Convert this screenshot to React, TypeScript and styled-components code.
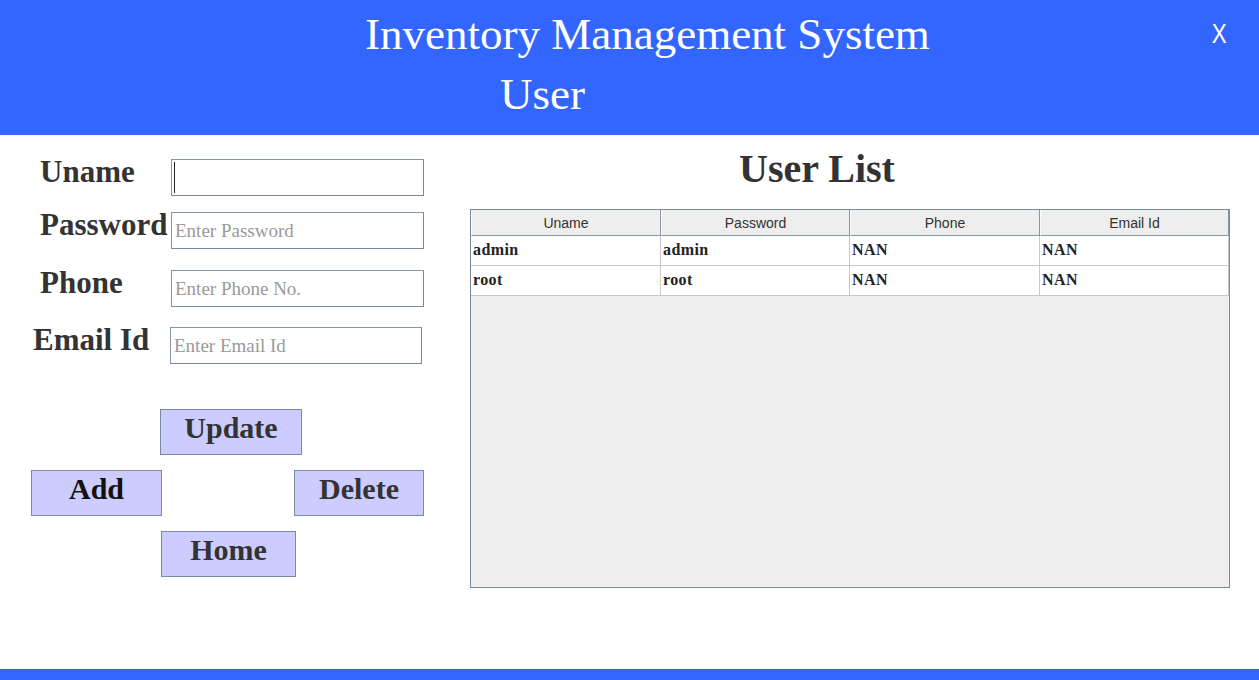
import { createGlobalStyle } from 'styled-components'
import styled from 'styled-components'

const GlobalStyle = createGlobalStyle`
  html, body {
    margin: 0;
    padding: 0;
    background: #ffffff;
  }
  body {
    font-family: 'Liberation Serif', 'Times New Roman', serif;
  }
`

const Page = styled.div`
  width: 1259px;
  height: 680px;
  display: flex;
  flex-direction: column;
  overflow: hidden;
`

const Header = styled.header`
  height: 135px;
  background: #3366ff;
  color: #ffffff;
  display: flex;
  justify-content: space-between;
  align-items: flex-start;
  flex-shrink: 0;
`

const TitleBlock = styled.div`
  display: flex;
  flex-direction: column;
  padding-top: 12px;
`

const AppTitle = styled.h1<{ $indent: number }>`
  margin: 0;
  padding-left: ${({ $indent }) => $indent}px;
  font-family: 'Liberation Serif', 'Times New Roman', serif;
  font-weight: normal;
  font-size: 45px;
  line-height: 44px;
  height: 60px;
  white-space: nowrap;
`

const CloseButton = styled.button`
  border: none;
  background: transparent;
  color: #ffffff;
  font-family: 'Liberation Sans', Arial, sans-serif;
  font-size: 28px;
  line-height: 28px;
  padding: 0;
  margin: 20px 30px 0 0;
  transform: scaleX(0.8);
  cursor: pointer;
`

const Main = styled.main`
  flex: 1;
  display: flex;
`

const LeftPanel = styled.section`
  width: 470px;
  padding-top: 24px;
  display: flex;
  flex-direction: column;
`

const FieldRow = styled.div<{ $gap: number; $labelLeft: number; $inputLeft: number }>`
  display: flex;
  align-items: flex-start;
  margin-top: ${({ $gap }) => $gap}px;
  padding-left: ${({ $labelLeft }) => $labelLeft}px;

  & > label {
    width: ${({ $inputLeft, $labelLeft }) => $inputLeft - $labelLeft}px;
  }
`

const Label = styled.label`
  margin-top: -2px;
  font-family: 'Liberation Serif', 'Times New Roman', serif;
  font-weight: bold;
  font-size: 31px;
  line-height: 30px;
  color: #333333;
  white-space: nowrap;
`

const InputBox = styled.div<{ $width: number }>`
  position: relative;
  width: ${({ $width }) => $width}px;
  height: 37px;
  box-sizing: border-box;
  border: 1px solid #7a8898;
  border-top-color: #8795a4;
  border-left-color: #8795a4;
  background: #ffffff;
`

const TextInput = styled.input`
  width: 100%;
  height: 100%;
  box-sizing: border-box;
  border: none;
  outline: none;
  padding: 0 0 0 3px;
  font-family: 'Liberation Serif', 'Times New Roman', serif;
  font-size: 19px;
  color: #333333;
  background: transparent;

  &::placeholder {
    color: #9a9a9a;
  }
`

const Caret = styled.span`
  position: absolute;
  left: 2px;
  top: 2px;
  bottom: 2px;
  width: 1px;
  background: #222222;
`

const ButtonArea = styled.div`
  margin-top: 45px;
  display: flex;
  flex-direction: column;
  gap: 15px;
`

const ButtonRow = styled.div<{ $left: number; $right?: number }>`
  display: flex;
  justify-content: space-between;
  padding-left: ${({ $left }) => $left}px;
  width: ${({ $right, $left }) => ($right ? $right - $left : 'auto')}px;
`

const ActionButton = styled.button<{ $width: number; $dark?: boolean }>`
  width: ${({ $width }) => $width}px;
  height: 46px;
  box-sizing: border-box;
  border: 1px solid #7a8aa2;
  background: #ccccff;
  display: flex;
  justify-content: center;
  align-items: flex-start;
  padding: 3px 0 0;
  font-family: 'Liberation Serif', 'Times New Roman', serif;
  font-weight: bold;
  font-size: 30px;
  line-height: 30px;
  color: ${({ $dark }) => ($dark ? '#111111' : '#333333')};
  cursor: pointer;
`

const RightPanel = styled.section`
  width: 760px;
  display: flex;
  flex-direction: column;
`

const ListTitle = styled.h2`
  margin: 14px 0 0;
  padding-left: 269px;
  font-family: 'Liberation Serif', 'Times New Roman', serif;
  font-weight: bold;
  font-size: 40px;
  line-height: 40px;
  color: #333333;
  white-space: nowrap;
`

const TableFrame = styled.div`
  margin-top: 20px;
  height: 379px;
  box-sizing: border-box;
  border: 1px solid #7a8b9b;
  background: #eeeeee;
  display: flex;
  flex-direction: column;
`

const TableRow = styled.div<{ $head?: boolean }>`
  display: grid;
  grid-template-columns: 190px 189px 190px 189px;
  height: ${({ $head }) => ($head ? 26 : 30)}px;
  background: ${({ $head }) => ($head ? '#eeeeee' : '#ffffff')};
`

const HeadCell = styled.div`
  box-sizing: border-box;
  border-left: 1px solid #fbfbfb;
  border-right: 1px solid #8796a5;
  border-bottom: 1px solid #8796a5;
  display: flex;
  align-items: center;
  justify-content: center;
  padding-top: 1px;
  font-family: 'Liberation Sans', Arial, sans-serif;
  font-size: 14px;
  color: #333333;
`

const Cell = styled.div`
  box-sizing: border-box;
  border-right: 1px solid #c8c8c8;
  border-bottom: 1px solid #c8c8c8;
  display: flex;
  align-items: center;
  padding: 0 0 1px 2px;
  font-family: 'Liberation Serif', 'Times New Roman', serif;
  font-weight: bold;
  font-size: 16px;
  letter-spacing: 0.4px;
  color: #222222;
`

const Footer = styled.footer`
  height: 11px;
  background: #3366ff;
  flex-shrink: 0;
`

const columns = ['Uname', 'Password', 'Phone', 'Email Id']

const users = [
  { uname: 'admin', password: 'admin', phone: 'NAN', email: 'NAN' },
  { uname: 'root', password: 'root', phone: 'NAN', email: 'NAN' },
]

const fields = [
  { label: 'Uname', placeholder: '', gap: 0, labelLeft: 40, inputLeft: 171, width: 253, focused: true },
  { label: 'Password', placeholder: 'Enter Password', gap: 16, labelLeft: 40, inputLeft: 171, width: 253 },
  { label: 'Phone', placeholder: 'Enter Phone No.', gap: 21, labelLeft: 40, inputLeft: 171, width: 253 },
  { label: 'Email Id', placeholder: 'Enter Email Id', gap: 20, labelLeft: 33, inputLeft: 170, width: 252 },
]

export default function App() {
  return (
    <>
      <GlobalStyle />
      <Page>
        <Header>
          <TitleBlock>
            <AppTitle $indent={365}>Inventory Management System</AppTitle>
            <AppTitle $indent={500}>User</AppTitle>
          </TitleBlock>
          <CloseButton>X</CloseButton>
        </Header>
        <Main>
          <LeftPanel>
            {fields.map((f) => (
              <FieldRow key={f.label} $gap={f.gap} $labelLeft={f.labelLeft} $inputLeft={f.inputLeft}>
                <Label>{f.label}</Label>
                <InputBox $width={f.width}>
                  <TextInput placeholder={f.placeholder} />
                  {f.focused && <Caret />}
                </InputBox>
              </FieldRow>
            ))}
            <ButtonArea>
              <ButtonRow $left={160}>
                <ActionButton $width={142}>Update</ActionButton>
              </ButtonRow>
              <ButtonRow $left={31} $right={424}>
                <ActionButton $width={131} $dark>
                  Add
                </ActionButton>
                <ActionButton $width={130}>Delete</ActionButton>
              </ButtonRow>
              <ButtonRow $left={161}>
                <ActionButton $width={135}>Home</ActionButton>
              </ButtonRow>
            </ButtonArea>
          </LeftPanel>
          <RightPanel>
            <ListTitle>User List</ListTitle>
            <TableFrame>
              <TableRow $head>
                {columns.map((c) => (
                  <HeadCell key={c}>{c}</HeadCell>
                ))}
              </TableRow>
              {users.map((u) => (
                <TableRow key={u.uname}>
                  <Cell>{u.uname}</Cell>
                  <Cell>{u.password}</Cell>
                  <Cell>{u.phone}</Cell>
                  <Cell>{u.email}</Cell>
                </TableRow>
              ))}
            </TableFrame>
          </RightPanel>
        </Main>
        <Footer />
      </Page>
    </>
  )
}
